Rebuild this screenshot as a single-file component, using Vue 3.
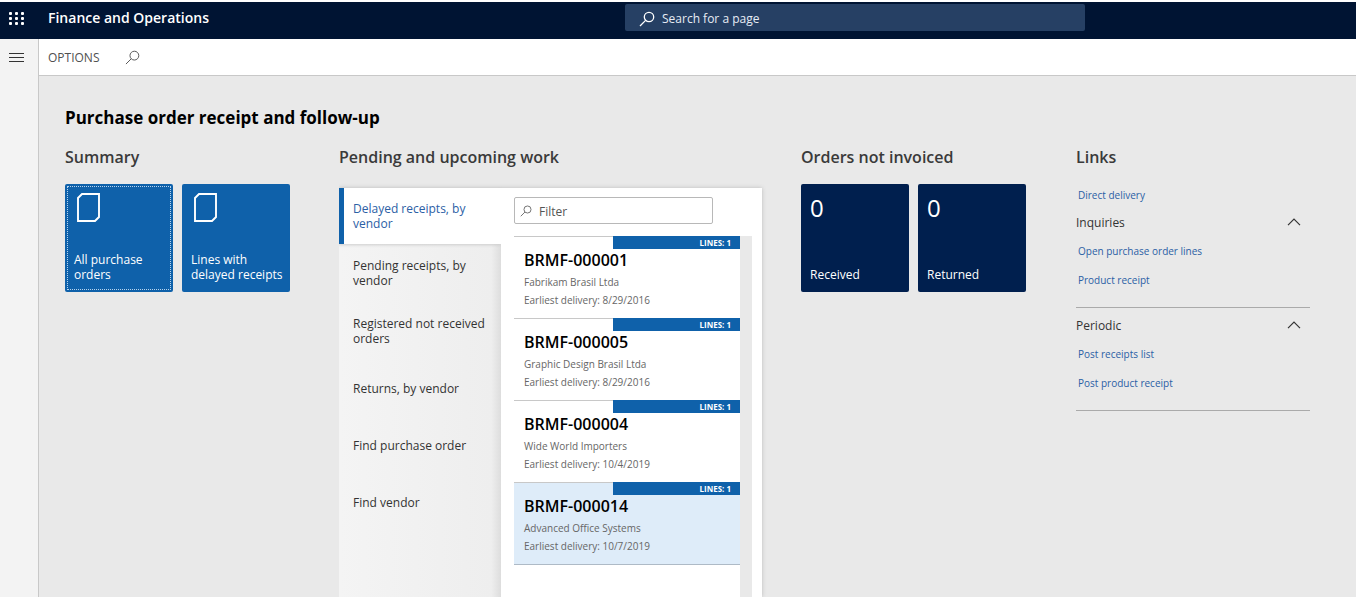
<script setup>
import { ref } from 'vue'

const pageQuery = ref('')
const filter = ref('')

const summaryTiles = ['All purchase orders', 'Lines with delayed receipts']

const tabs = [
  'Delayed receipts, by vendor',
  'Pending receipts, by vendor',
  'Registered not received orders',
  'Returns, by vendor',
  'Find purchase order',
  'Find vendor',
]
const activeTab = ref(0)

const orders = [
  { id: 'BRMF-000001', vendor: 'Fabrikam Brasil Ltda', date: '8/29/2016', lines: 1 },
  { id: 'BRMF-000005', vendor: 'Graphic Design Brasil Ltda', date: '8/29/2016', lines: 1 },
  { id: 'BRMF-000004', vendor: 'Wide World Importers', date: '10/4/2019', lines: 1 },
  { id: 'BRMF-000014', vendor: 'Advanced Office Systems', date: '10/7/2019', lines: 1 },
]
const selectedOrder = ref('BRMF-000014')

const counters = [
  { label: 'Received', value: 0 },
  { label: 'Returned', value: 0 },
]

const linkGroups = ref([
  { title: 'Inquiries', open: true, links: ['Open purchase order lines', 'Product receipt'] },
  { title: 'Periodic', open: true, links: ['Post receipts list', 'Post product receipt'] },
])
</script>

<template>
  <div class="app">
    <header class="topbar">
      <button class="launcher" type="button" aria-label="App launcher">
        <svg width="16" height="16" viewBox="0 0 16 16" fill="currentColor">
          <template v-for="row in 3" :key="row">
            <rect v-for="col in 3" :key="col" :x="col * 6 - 5" :y="row * 5 - 3" width="3" height="3" rx="1" />
          </template>
        </svg>
      </button>
      <a class="brand" href="#">Finance and Operations</a>
      <label class="search">
        <svg width="16" height="16" viewBox="0 0 16 16" fill="none" stroke="currentColor" stroke-width="1.3">
          <circle cx="10" cy="6" r="4.7" />
          <path d="M6.6 9.4 1 15" />
        </svg>
        <input v-model="pageQuery" type="text" placeholder="Search for a page" aria-label="Search for a page" />
      </label>
    </header>

    <div class="body">
      <nav class="rail">
        <button type="button" aria-label="Expand navigation">
          <svg width="15" height="10" viewBox="0 0 15 10" stroke="currentColor" stroke-width="1">
            <path d="M0 .5h15M0 4.5h15M0 8.5h15" />
          </svg>
        </button>
      </nav>

      <div class="page">
        <div class="toolbar">
          <button type="button">OPTIONS</button>
          <button type="button" aria-label="Search actions">
            <svg width="15" height="15" viewBox="0 0 16 16" fill="none" stroke="currentColor" stroke-width="1">
              <circle cx="10" cy="6" r="4.7" />
              <path d="M6.6 9.4 1 15" />
            </svg>
          </button>
        </div>

        <main class="workspace">
          <h1>Purchase order receipt and follow-up</h1>
          <div class="sections">
            <section>
              <h2>Summary</h2>
              <div class="tiles">
                <button v-for="(tile, i) in summaryTiles" :key="tile" class="tile" :class="{ focused: i === 0 }" type="button">
                  <svg width="24" height="30" viewBox="0 0 24 30" fill="none" stroke="currentColor" stroke-width="1.9">
                    <path d="M5 1h17v23l-4 4H1V5z" />
                  </svg>
                  <span>{{ tile }}</span>
                </button>
              </div>
            </section>

            <section class="pending">
              <h2>Pending and upcoming work</h2>
              <div class="panel">
                <div class="tabs" role="tablist">
                  <button
                    v-for="(tab, i) in tabs"
                    :key="tab"
                    class="tab"
                    :class="{ active: i === activeTab }"
                    type="button"
                    role="tab"
                    :aria-selected="i === activeTab"
                    @click="activeTab = i"
                  >{{ tab }}</button>
                </div>
                <div class="list-pane">
                  <label class="filter">
                    <svg width="12" height="12" viewBox="0 0 16 16" fill="none" stroke="currentColor" stroke-width="1.2">
                      <circle cx="10" cy="6" r="4.7" />
                      <path d="M6.6 9.4 1 15" />
                    </svg>
                    <input v-model="filter" type="text" placeholder="Filter" aria-label="Filter" />
                  </label>
                  <div class="list-scroll">
                    <ul class="orders">
                      <li v-for="order in orders" :key="order.id">
                        <button
                          class="order"
                          :class="{ selected: order.id === selectedOrder }"
                          type="button"
                          @click="selectedOrder = order.id"
                        >
                          <span class="lines">LINES: {{ order.lines }}</span>
                          <strong>{{ order.id }}</strong>
                          <span class="detail">{{ order.vendor }}</span>
                          <span class="detail">Earliest delivery: {{ order.date }}</span>
                        </button>
                      </li>
                    </ul>
                    <div class="track"></div>
                  </div>
                </div>
              </div>
            </section>

            <section>
              <h2>Orders not invoiced</h2>
              <div class="tiles">
                <button v-for="counter in counters" :key="counter.label" class="tile dark" type="button">
                  <span class="count">{{ counter.value }}</span>
                  <span>{{ counter.label }}</span>
                </button>
              </div>
            </section>

            <section class="links">
              <h2>Links</h2>
              <a href="#">Direct delivery</a>
              <div v-for="group in linkGroups" :key="group.title" class="group">
                <button type="button" :aria-expanded="group.open" @click="group.open = !group.open">
                  {{ group.title }}
                  <svg width="14" height="8" viewBox="0 0 14 8" fill="none" stroke="currentColor" stroke-width="1.2">
                    <path d="M1 7.2 7 1.2l6 6" />
                  </svg>
                </button>
                <template v-if="group.open">
                  <a v-for="link in group.links" :key="link" href="#">{{ link }}</a>
                </template>
              </div>
            </section>
          </div>
        </main>
      </div>
    </div>
  </div>
</template>

<style>
body {
  margin: 0;
  background: #fff;
}
</style>

<style scoped>
.app {
  display: flex;
  flex-direction: column;
  box-sizing: border-box;
  min-height: 100vh;
  padding: 2px 0;
  font-family: "Open Sans", "Noto Sans", sans-serif;
  font-size: 12px;
  color: #333;
}
.app * {
  box-sizing: border-box;
}
button,
input {
  margin: 0;
  padding: 0;
  border: 0;
  background: none;
  font: inherit;
  color: inherit;
  text-align: left;
}
input {
  min-width: 0;
  flex: 1;
  outline: 0;
}
a {
  color: #2b60a5;
  text-decoration: none;
}
svg {
  display: block;
  flex: none;
}
h1,
h2 {
  margin: 0;
}

.topbar {
  display: grid;
  grid-template-columns: 48px 577fr 460px 271fr;
  height: 37px;
  background: #001433;
  color: #fff;
}
.launcher {
  height: 32px;
  padding-left: 8px;
}
.brand {
  color: #fff;
  font-size: 14px;
  font-weight: 600;
  line-height: 32px;
}
.search {
  display: flex;
  align-items: center;
  gap: 7px;
  height: 27px;
  margin-top: 2px;
  padding: 2px 14px 0;
  border-radius: 2px;
  background: #264064;
}
.search input::placeholder {
  color: #e6ecf4;
  opacity: 1;
}

.body {
  display: flex;
  flex: 1;
}
.rail {
  display: flex;
  align-items: flex-start;
  width: 39px;
  padding: 14px 0 0 9px;
  border-right: 1px solid #c8c8c8;
  background: #f3f3f3;
}
.page {
  display: flex;
  flex: 1;
  flex-direction: column;
}
.toolbar {
  display: flex;
  align-items: center;
  gap: 26px;
  height: 37px;
  padding-left: 9px;
  border-bottom: 1px solid #c8c8c8;
  background: #fff;
  color: #505050;
}

.workspace {
  display: flex;
  flex: 1;
  flex-direction: column;
  padding: 30px 46px 0 26px;
  background: #e9e9e9;
}
h1 {
  color: #000;
  font-size: 17px;
  font-weight: 700;
  line-height: 24px;
}
.sections {
  display: grid;
  flex: 1;
  grid-template-columns: 235px minmax(400px, 1fr) 236px 234px;
  gap: 39px;
  margin-top: 15px;
}
h2 {
  color: #3a3a3a;
  font-size: 16px;
  font-weight: 600;
  line-height: 24px;
}

.tiles {
  display: flex;
  gap: 9px;
  margin-top: 15px;
}
.tile {
  display: flex;
  flex-direction: column;
  justify-content: space-between;
  width: 108px;
  height: 108px;
  padding: 9px 2px 10px 9px;
  border-radius: 2px;
  background: #0f61aa;
  color: #fff;
  line-height: 15px;
}
.tile svg {
  margin-left: 3px;
}
.focused {
  outline: 1px dotted #b5d3ee;
  outline-offset: -3px;
}
.dark {
  background: #001f4e;
}
.count {
  font-size: 24px;
  font-weight: 400;
  line-height: 30px;
}

.pending {
  display: flex;
  flex-direction: column;
}
.panel {
  display: flex;
  flex: 1;
  margin-top: 19px;
  box-shadow: 0 0 4px #bbb;
  clip-path: inset(-6px -6px 0 0);
}
.tabs {
  display: flex;
  flex-direction: column;
  width: 162px;
  background: linear-gradient(90deg, #f4f4f4, #eee 94%, #ddd);
}
.tab {
  display: flex;
  align-items: center;
  min-height: 57px;
  padding: 14px;
  line-height: 15px;
}
.active {
  min-height: 56px;
  padding: 13px 14px 13px 9px;
  border-left: 5px solid #0f61aa;
  background: #fff;
  color: #2b60a5;
  box-shadow: 0 1px 3px #ccc;
}
.list-pane {
  position: relative;
  display: flex;
  flex: 1;
  flex-direction: column;
  padding: 9px 10px 0 13px;
  background: #fff;
}
.filter {
  display: flex;
  align-items: center;
  gap: 7px;
  width: 199px;
  height: 27px;
  padding: 1px 5px 0;
  border: 1px solid #b8b8b8;
  border-radius: 2px;
  color: #666;
}
.filter input::placeholder {
  color: #555;
  opacity: 1;
}
.list-scroll {
  display: flex;
  flex: 1;
  margin-top: 12px;
}
.orders {
  flex: 1;
  margin: 0;
  padding: 0;
  list-style: none;
}
.orders li:last-child {
  border-bottom: 1px solid #aebac6;
}
.order {
  display: flex;
  flex-direction: column;
  width: 100%;
  height: 82px;
  padding-left: 10px;
  border-top: 1px solid #c8c8c8;
}
.selected {
  background: #deecf9;
}
.lines {
  align-self: flex-end;
  width: 127px;
  height: 13px;
  margin-top: -1px;
  padding-right: 9px;
  background: #0f61aa;
  color: #fff;
  font-size: 8px;
  font-weight: 700;
  line-height: 14px;
  text-align: right;
}
.order strong {
  margin-bottom: 2px;
  color: #000;
  font-size: 16px;
  font-weight: 600;
  line-height: 22px;
}
.detail {
  color: #666;
  font-size: 10px;
  line-height: 18px;
}
.track {
  width: 12px;
  background: #e9e9e9;
}

.links a {
  display: block;
  margin-top: 9px;
  padding-left: 2px;
  font-size: 10px;
  line-height: 20px;
}
.links h2 + a {
  margin-top: 16px;
}
.group {
  padding-bottom: 17px;
  border-bottom: 1px solid #aaa;
}
.group button {
  display: flex;
  align-items: center;
  justify-content: space-between;
  width: 100%;
  height: 20px;
  margin-top: 7px;
  padding-right: 9px;
}
</style>
